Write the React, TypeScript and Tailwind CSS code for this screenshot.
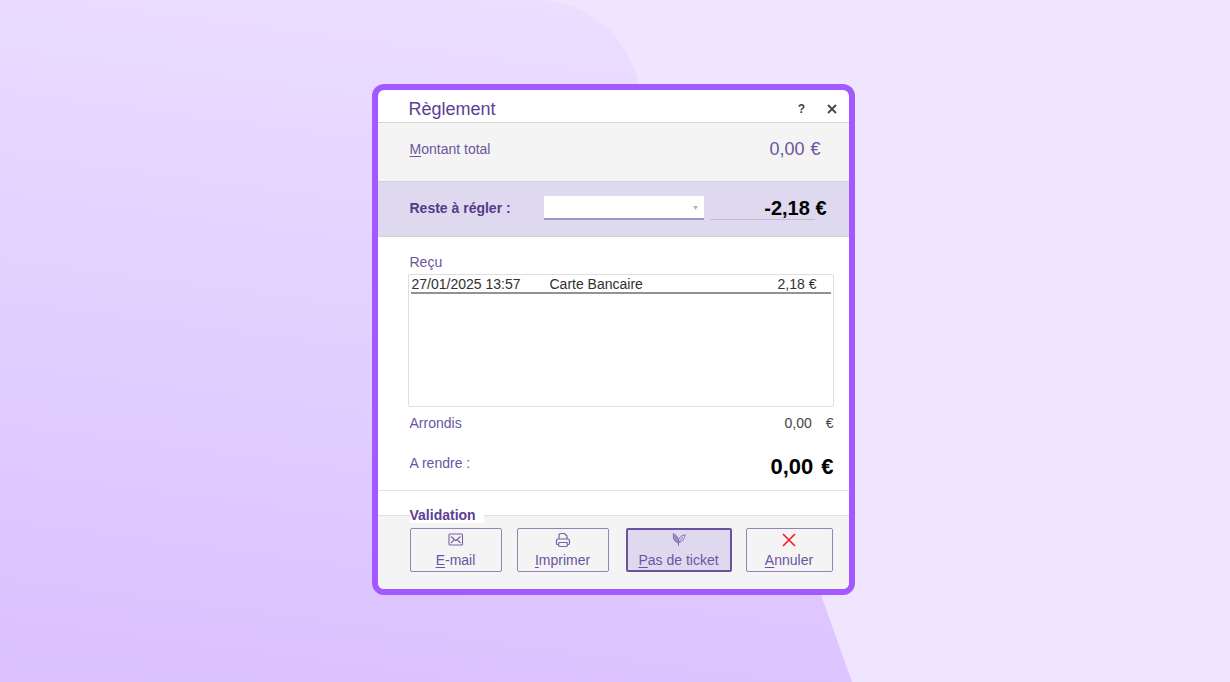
import type { ReactNode } from "react";

function Backdrop() {
  return (
    <svg
      className="absolute inset-0 h-full w-full"
      viewBox="0 0 1230 682"
      preserveAspectRatio="none"
      aria-hidden="true"
    >
      <defs>
        <linearGradient id="wave" gradientUnits="userSpaceOnUse" x1="340" y1="-50" x2="240" y2="710">
          <stop offset="0" stopColor="#ecdfff" />
          <stop offset="1" stopColor="#dac0ff" />
        </linearGradient>
      </defs>
      <path d="M0 0H540C592 4 626 34 639 84C662 180 690 250 740 375C775 462 798 528 821 595L852 682H0Z" fill="url(#wave)" />
    </svg>
  );
}

function MailIcon() {
  return (
    <svg width="16" height="16" viewBox="0 0 16 16" fill="none" stroke="#7561a8" strokeWidth="1.1" aria-hidden="true">
      <rect x="1" y="2" width="13.500" height="11" rx="1" />
      <path d="M3 4.500L7.800 8.700L12.500 4.500M3 11L6 8M12.500 11L9.500 8" />
    </svg>
  );
}

function PrinterIcon() {
  return (
    <svg width="16" height="16" viewBox="0 0 16 16" fill="none" stroke="#7561a8" strokeWidth="1.2" aria-hidden="true">
      <path d="M4 7V3.500Q4 1.500 6 1.500H9.500L12 4V7" />
      <path d="M3.500 12.500H2.500Q1.500 12.500 1.500 11V9Q1.500 7 3.500 7H12.500Q14.500 7 14.500 9V11Q14.500 12.500 13.500 12.500H12.500" />
      <path d="M4 10.500H12L12.500 13Q12.500 14.500 11 14.500H5Q3.500 14.500 3.500 13Z" />
    </svg>
  );
}

function LeafIcon() {
  return (
    <svg width="16" height="16" viewBox="0 0 16 16" fill="none" stroke="#8070ae" strokeWidth="1" strokeLinecap="round" aria-hidden="true">
      <path d="M2.500 2C5.500 3 7.500 5.500 7.500 11C4 10 1.500 7.500 2.500 2Z" fill="#9a8bc1" />
      <path d="M14 3C10.500 3.500 8.500 4.500 7.800 7.500C7.500 9 7.700 10 8 10.500C11.500 10 13.500 7 14 3Z" strokeWidth="0.9" />
      <path d="M7.500 11V13.500M8.500 9.500L11.500 5.500" />
    </svg>
  );
}

function CancelIcon() {
  return (
    <svg width="16" height="16" viewBox="0 0 16 16" stroke="#f51f2b" strokeWidth="1.7" aria-hidden="true">
      <path d="M2 2L14 14M14 2L2 14" />
    </svg>
  );
}

type ActionProps = { icon: ReactNode; hotkey: string; rest: string; className: string };

function Action({ icon, hotkey, rest, className }: ActionProps) {
  return (
    <button
      type="button"
      className={`flex h-11 flex-col items-center gap-1 rounded-xs text-sm leading-4 text-[#6b55a1] ${className}`}
    >
      {icon}
      <span className="whitespace-nowrap">
        <span className="underline underline-offset-2">{hotkey}</span>
        {rest}
      </span>
    </button>
  );
}

export default function App() {
  return (
    <div
      className="relative flex min-h-screen items-center justify-center bg-[#f0e5ff] text-sm text-[#6b55a1]"
      style={{ fontFamily: '"Liberation Sans", Arial, sans-serif' }}
    >
      <Backdrop />
      <main
        role="dialog"
        aria-labelledby="title"
        className="relative mr-1 mb-1 w-full max-w-[483px] overflow-hidden rounded-xl border-6 border-[#a259ff] bg-white"
      >
        <header className="flex h-[33px] items-center border-b border-[#d6d6d6] pt-1.5 pr-[9px] pl-[31px]">
          <h1 id="title" className="flex-1 text-lg leading-6 text-[#5b4094]">Règlement</h1>
          <button type="button" aria-label="Aide" className="mr-3 w-5 text-xs leading-4 font-bold text-[#444]">?</button>
          <button type="button" aria-label="Fermer" className="flex h-4 w-4 items-center justify-center">
            <svg width="10" height="10" viewBox="0 0 10 10" stroke="#444" strokeWidth="1.8" aria-hidden="true">
              <path d="M1 1L9 9M9 1L1 9" />
            </svg>
          </button>
        </header>

        <section className="flex h-[59px] items-start justify-between border-b border-[#d4d2d8] bg-[#f4f4f4] pt-4 pr-7 pl-8">
          <span className="leading-5"><span className="underline underline-offset-2">M</span>ontant total</span>
          <span className="flex gap-1.5 text-lg leading-5"><span>0,00</span><span>€</span></span>
        </section>

        <section className="flex h-[55px] items-center border-b border-[#d4d2d8] bg-[#dfd9f0] pr-[22px] pb-0.5 pl-8 text-[#533989]">
          <label htmlFor="mode" className="w-[134px] font-bold">Reste à régler :</label>
          <div className="relative w-40">
            <select id="mode" className="block h-6 w-full appearance-none rounded-none border-b-2 border-[#a394cc] bg-white">
              <option value=""></option>
            </select>
            <svg className="pointer-events-none absolute top-2.5 right-1.5" width="5" height="4" viewBox="0 0 5 4" aria-hidden="true">
              <path d="M0 0H5L2.500 4Z" fill="#b5b5b5" />
            </svg>
          </div>
          <output className="relative ml-1.5 flex-1 text-right text-xl leading-6 font-bold text-black">
            -2,18 €
            <span className="absolute right-3 bottom-0 left-0 h-px bg-[#c3bdd3]" />
          </output>
        </section>

        <section className="border-b border-[#e3e3e3] pt-[15px] pr-[15px] pb-2.5 pl-[30px]">
          <h2 id="recu" className="pb-0.5 pl-0.5 leading-5">Reçu</h2>
          <div className="h-[133px] rounded-xs border border-[#dedede] px-0.5">
            <table aria-labelledby="recu" className="w-full table-fixed border-b-2 border-[#929292] text-[#303030]">
              <tbody>
                <tr className="h-4.5 leading-4">
                  <td className="w-[138px] pt-px pl-px whitespace-nowrap">27/01/2025 13:57</td>
                  <td className="pt-px pl-px">Carte Bancaire</td>
                  <td className="w-24 pt-px pr-3.5 text-right">2,18 €</td>
                </tr>
              </tbody>
            </table>
          </div>
          <div className="flex justify-between pt-1.5 pl-0.5 leading-5">
            <span>Arrondis</span>
            <span className="flex gap-3.5 text-[#444]"><span>0,00</span><span>€</span></span>
          </div>
          <div className="flex justify-between pt-5 pl-0.5">
            <span className="leading-5">A rendre :</span>
            <output className="flex gap-2 pt-0.5 text-[22px] leading-6 font-bold text-black"><span>0,00</span><span>€</span></output>
          </div>
          <div className="h-px" />
        </section>

        <section aria-labelledby="validation">
          <div className="h-6" />
          <div className="border-t border-[#e0e0e0] bg-[#f4f4f4] pr-[15px] pb-[17px] pl-8">
            <h2 id="validation" className="-mt-[9px] w-[74px] bg-white leading-4 font-bold text-[#5b4094]">Validation</h2>
            <div className="mt-[5px] flex">
              <Action icon={<MailIcon />} hotkey="E" rest="-mail" className="w-[92px] border border-[#9483bd] pt-[3px]" />
              <Action icon={<PrinterIcon />} hotkey="I" rest="mprimer" className="ml-[15px] w-[92px] border border-[#9483bd] pt-[3px]" />
              <Action icon={<LeafIcon />} hotkey="P" rest="as de ticket" className="ml-[17px] w-[106px] border-2 border-[#6c529e] bg-[#dfd9f0] pt-0.5" />
              <Action icon={<CancelIcon />} hotkey="A" rest="nnuler" className="ml-3.5 w-[87px] border border-[#9483bd] pt-[3px]" />
            </div>
          </div>
        </section>
      </main>
    </div>
  );
}
